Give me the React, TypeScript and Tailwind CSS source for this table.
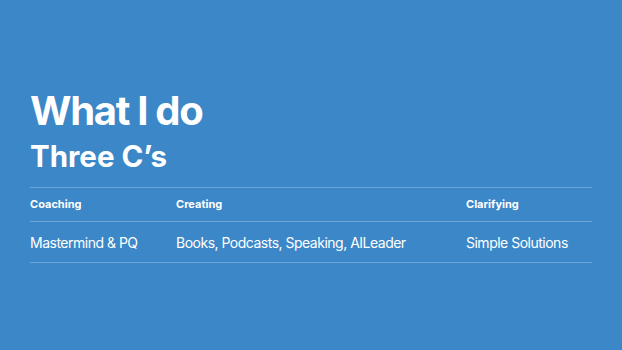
export default function App() {
  const cols = [
    { head: "Coaching", body: "Mastermind & PQ", w: "w-[146px]" },
    { head: "Creating", body: "Books, Podcasts, Speaking, AILeader", w: "w-[290px]" },
    { head: "Clarifying", body: "Simple Solutions", w: "flex-1" },
  ];

  return (
    <div
      className="flex h-[350px] w-[622px] flex-col bg-[#3c87c8] px-[30px] pt-[88px] text-white"
      style={{ fontFamily: "Inter, 'Noto Sans', sans-serif" }}
    >
      <h1 className="text-[40px] font-bold leading-[46px] tracking-[-1.3px]">What I do</h1>
      <h2 className="mt-[2px] text-[29.5px] font-bold leading-[40px]">Three C’s</h2>
      <div className="mt-[11px] w-[562px] border-t border-white/25">
        <div className="flex h-[34px] items-center border-b border-white/25 text-[11px] font-bold">
          {cols.map((c) => (
            <div key={c.head} className={c.w}>
              {c.head}
            </div>
          ))}
        </div>
        <div className="flex h-[41px] items-center border-b border-white/25 text-[14px] tracking-[-0.5px]">
          {cols.map((c) => (
            <div key={c.head} className={c.w}>
              {c.body}
            </div>
          ))}
        </div>
      </div>
    </div>
  );
}
